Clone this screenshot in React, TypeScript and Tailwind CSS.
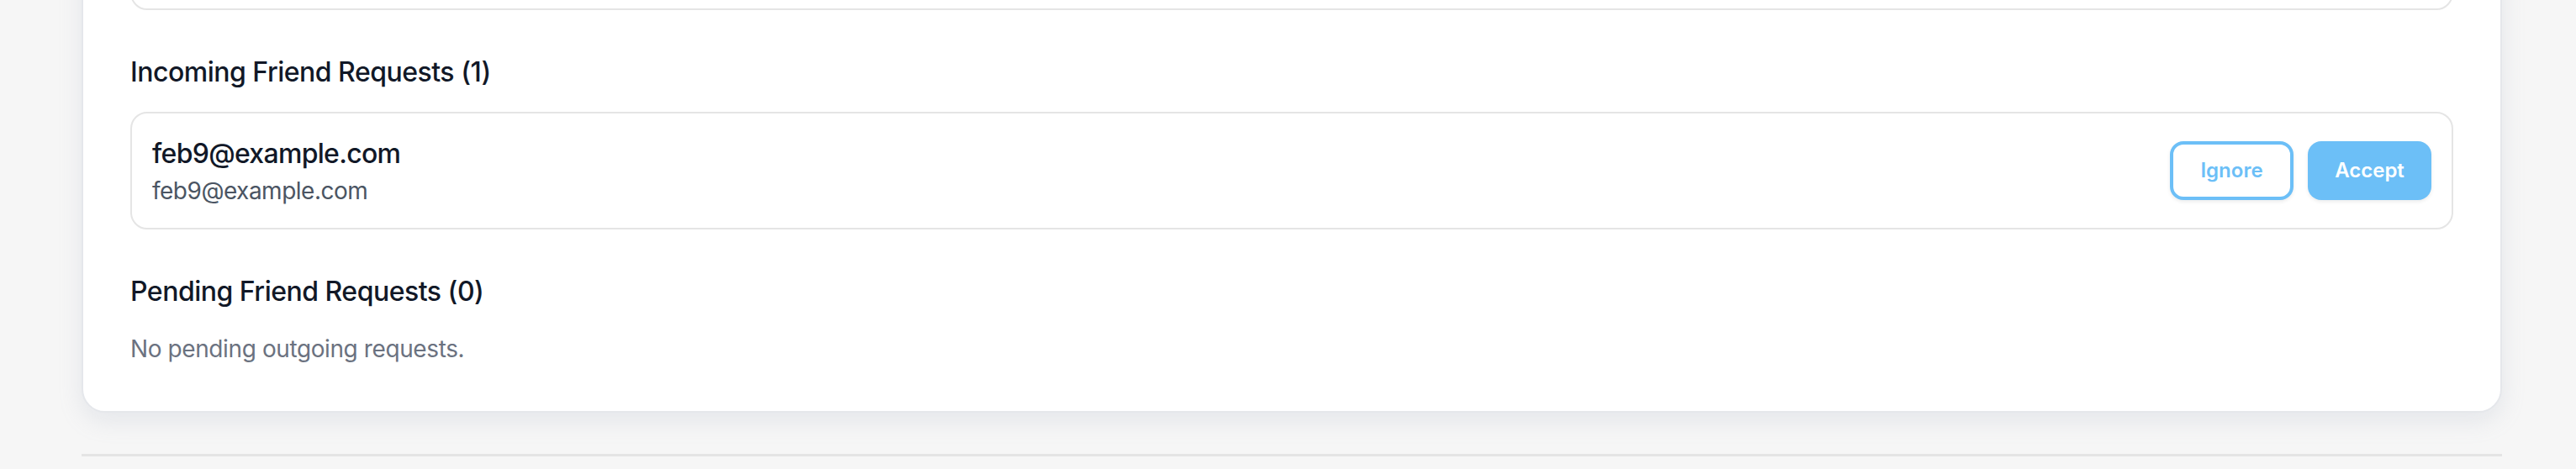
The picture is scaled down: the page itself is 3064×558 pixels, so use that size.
import React from "react";

const requests = [{ name: "feb9@example.com", email: "feb9@example.com" }];

export default function App() {
    return (
        <div
            className="h-[558px] w-full overflow-hidden bg-[#f6f6f6]"
            style={{ fontFamily: "Inter, 'Noto Sans', sans-serif" }}
        >
            <div className="ml-[97px] mr-[88px]">
                {/* Card */}
                <div className="-mt-[150px] rounded-[28px] border-2 border-[#e5e7eb] bg-white px-[56px] pt-[56px] pb-[54px] shadow-[0_10px_28px_rgba(148,163,184,0.18)]">
                    {/* Previous section (cut off) */}
                    <div className="h-[104px] rounded-[20px] border-2 border-[#e5e5e5]" />

                    {/* Incoming */}
                    <h2 className="mt-[50px] text-[32px] leading-[48px] font-medium tracking-[-0.5px] text-[#111827]">
                        Incoming Friend Requests ({requests.length})
                    </h2>
                    <div className="mt-[23px] flex flex-col gap-4">
                        {requests.map((r) => (
                            <div
                                key={r.email}
                                className="flex items-center justify-between rounded-[20px] border-2 border-[#e5e5e5] p-[24px]"
                            >
                                <div className="flex flex-col">
                                    <span className="text-[32px] leading-[48px] font-medium tracking-[-0.7px] text-[#111827]">
                                        {r.name}
                                    </span>
                                    <span className="text-[28px] leading-[40px] tracking-[-0.5px] text-[#4b5563]">
                                        {r.email}
                                    </span>
                                </div>
                                <div className="flex items-center gap-[17px]">
                                    <button className="flex h-[70px] w-[147px] items-center justify-center rounded-[16px] border-[4px] border-[#6cbff7] bg-white text-[24px] font-semibold text-[#6cbff7] shadow-[0_2px_4px_rgba(0,0,0,0.08)]">
                                        Ignore
                                    </button>
                                    <button className="flex h-[70px] w-[147px] items-center justify-center rounded-[16px] bg-[#6cbff7] text-[24px] font-semibold text-white shadow-[0_2px_4px_rgba(0,0,0,0.08)]">
                                        Accept
                                    </button>
                                </div>
                            </div>
                        ))}
                    </div>

                    {/* Pending */}
                    <h2 className="mt-[50px] text-[32px] leading-[48px] font-medium tracking-[-0.5px] text-[#111827]">
                        Pending Friend Requests (0)
                    </h2>
                    <p className="mt-[24px] text-[28px] leading-[40px] tracking-[-0.4px] text-[#6b7280]">
                        No pending outgoing requests.
                    </p>
                </div>

                {/* Footer divider */}
                <div className="mt-[49px] h-[3px] bg-[#e4e4e4]" />
            </div>
        </div>
    );
}
